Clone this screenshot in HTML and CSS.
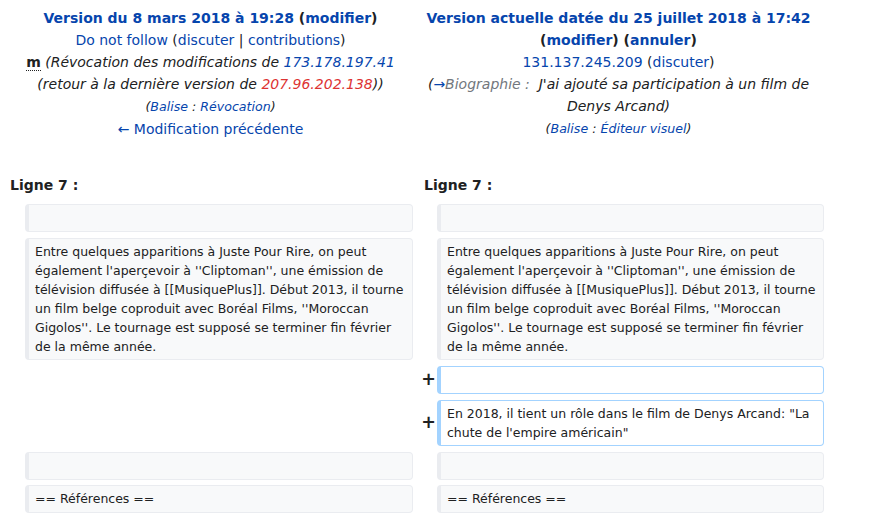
FILE: index.html
```html
<!DOCTYPE html>
<html lang="fr">
<head>
<meta charset="utf-8">
<title>Différences entre les versions</title>
<link rel="stylesheet" href="styles.css">
</head>
<body>
<div class="page">
  <div class="diff-header">
    <div class="diff-otitle">
      <div class="line"><strong><a href="#">Version du 8 mars 2018 à 19:28</a> (<a href="#">modifier</a>)</strong></div>
      <div class="line"><a href="#">Do not follow</a> (<a href="#">discuter</a> | <a href="#">contributions</a>)</div>
      <div class="line"><abbr class="minor" title="Modification mineure">m</abbr> <span class="comment">(Révocation des modifications de <a href="#">173.178.197.41</a> (retour à la dernière version de <a href="#" class="new">207.96.202.138</a>))</span></div>
      <div class="line"><span class="tags">(<a href="#">Balise</a> : <a href="#">Révocation</a>)</span></div>
      <div class="line"><a href="#">← Modification précédente</a></div>
    </div>
    <div class="diff-ntitle">
      <div class="line"><strong><a href="#">Version actuelle datée du 25 juillet 2018 à 17:42</a> (<a href="#">modifier</a>) (<a href="#">annuler</a>)</strong></div>
      <div class="line"><a href="#">131.137.245.209</a> (<a href="#">discuter</a>)</div>
      <div class="line"><span class="comment">(<span class="autocomment"><a href="#">→</a>Biographie :&nbsp;</span> J'ai ajouté sa participation à un film de Denys Arcand)</span></div>
      <div class="line"><span class="tags">(<a href="#">Balise</a> : <a href="#">Éditeur visuel</a>)</span></div>
    </div>
  </div>

  <div class="diff-linenos">
    <div class="lineno lineno-left">Ligne 7 :</div>
    <div class="lineno lineno-right">Ligne 7 :</div>
  </div>

  <div class="diff-body">
    <div class="marker"></div>
    <div class="cell context empty"></div>
    <div class="marker"></div>
    <div class="cell context empty"></div>

    <div class="marker"></div>
    <div class="cell context">Entre quelques apparitions à Juste Pour Rire, on peut également l'aperçevoir à ''Cliptoman'', une émission de télévision diffusée à [[MusiquePlus]]. Début 2013, il tourne un film belge coproduit avec Boréal Films, ''Moroccan Gigolos''. Le tournage est supposé se terminer fin février de la même année.</div>
    <div class="marker"></div>
    <div class="cell context">Entre quelques apparitions à Juste Pour Rire, on peut également l'aperçevoir à ''Cliptoman'', une émission de télévision diffusée à [[MusiquePlus]]. Début 2013, il tourne un film belge coproduit avec Boréal Films, ''Moroccan Gigolos''. Le tournage est supposé se terminer fin février de la même année.</div>

    <div class="marker"></div>
    <div class="blank"></div>
    <div class="marker">+</div>
    <div class="cell added empty"></div>

    <div class="marker"></div>
    <div class="blank"></div>
    <div class="marker">+</div>
    <div class="cell added">En 2018, il tient un rôle dans le film de Denys Arcand: "La chute de l'empire américain"</div>

    <div class="marker"></div>
    <div class="cell context empty"></div>
    <div class="marker"></div>
    <div class="cell context empty"></div>

    <div class="marker"></div>
    <div class="cell context">== Références ==</div>
    <div class="marker"></div>
    <div class="cell context">== Références ==</div>
  </div>
</div>
</body>
</html>
```

FILE: styles.css
```css
html, body {
  margin: 0;
  padding: 0;
  background: #ffffff;
}

body {
  font-family: "DejaVu Sans", sans-serif;
  font-size: 14px;
  color: #202122;
}

a {
  color: #0645ad;
  text-decoration: none;
}

a.new {
  color: #d33;
}

.page {
  padding: 7px 0 0 8px;
}

.diff-header {
  display: grid;
  grid-template-columns: 405px 411px;
  line-height: 22px;
  text-align: center;
}

.minor {
  font-weight: bold;
  text-decoration: none;
  border-bottom: 1px dotted #202122;
}

.comment {
  font-style: italic;
  color: #202122;
}

.autocomment {
  color: #72777d;
}

.tags {
  font-style: italic;
  font-size: 12.6px;
}

.diff-linenos {
  display: grid;
  grid-template-columns: 405px 411px;
  margin-top: 34px;
  line-height: 22px;
  font-weight: bold;
}

.lineno-left {
  padding-left: 2px;
}

.lineno-right {
  padding-left: 11px;
}

.diff-body {
  display: grid;
  grid-template-columns: 17px 388px 24px 387px;
  row-gap: 5.5px;
  margin-top: 8px;
}

.marker {
  display: flex;
  align-items: center;
  justify-content: flex-end;
  padding-right: 1px;
  font-weight: bold;
  font-size: 17.5px;
  line-height: 1;
}

.cell {
  box-sizing: border-box;
  font-size: 12.5px;
  line-height: 19.1px;
  padding: 3px 6px 3px 6px;
  border-style: solid;
  border-width: 1px 1px 1px 4px;
  border-radius: 4px;
  white-space: pre-wrap;
  color: #202122;
}

.empty {
  min-height: 28.4px;
}

.context {
  background: #f8f9fa;
  border-color: #eaecf0;
}

.added {
  background: #ffffff;
  border-color: #a3d3ff;
}
```
